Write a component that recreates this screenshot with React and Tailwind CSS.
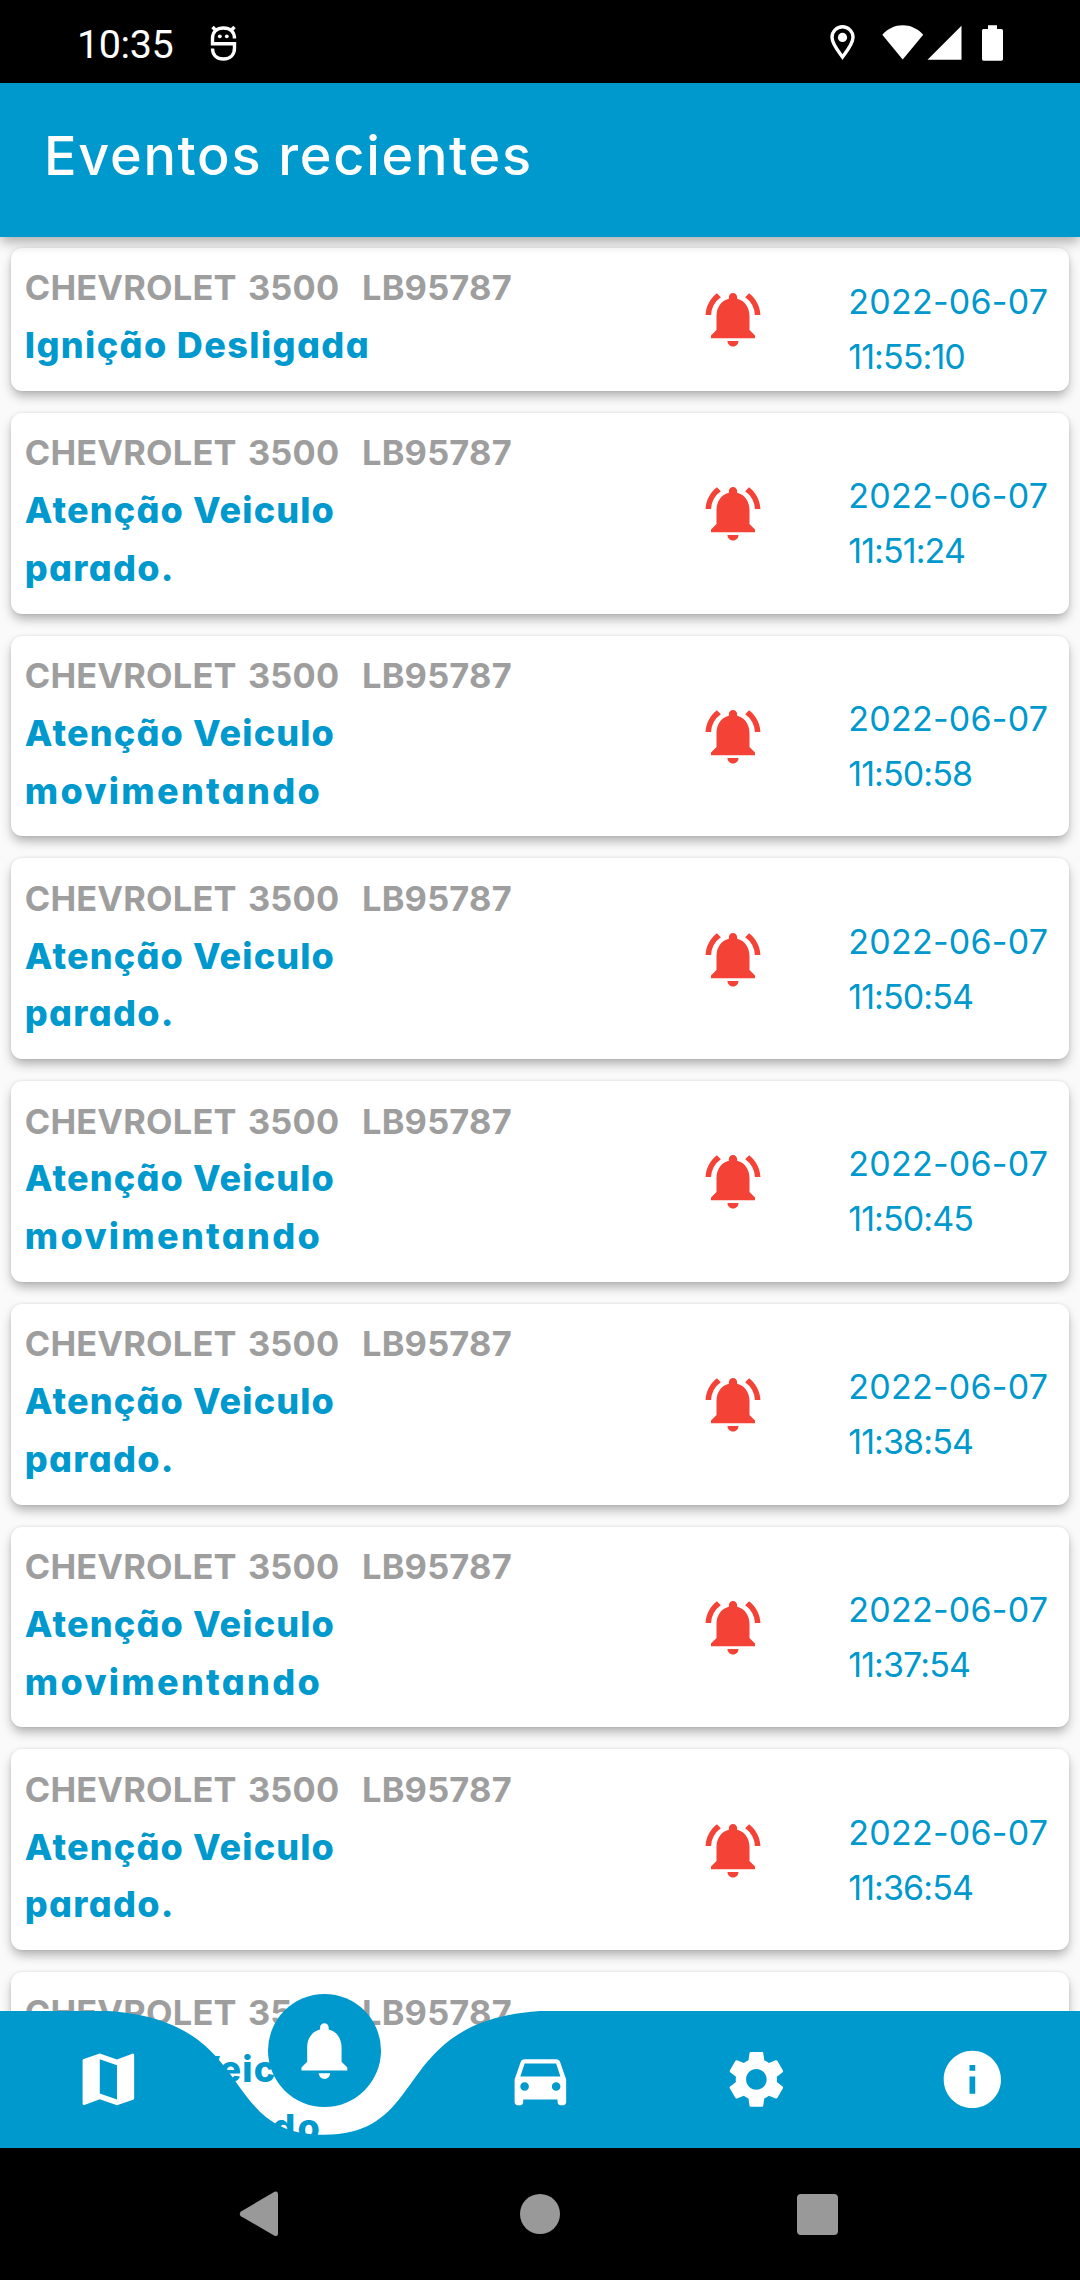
import React from 'react';
import {
  MdDirectionsCar,
  MdInfo,
  MdMap,
  MdNotifications,
  MdNotificationsActive,
  MdSettings,
} from 'react-icons/md';

const IGNITION_OFF = { text: 'Ignição Desligada', textClass: 'tracking-[1.4px]' };
const STOPPED = {
  text: 'Atenção Veiculo',
  textClass: 'tracking-[1.15px]',
  rest: 'parado.',
  restClass: 'tracking-[1.3px]',
};
const MOVING = {
  text: 'Atenção Veiculo',
  textClass: 'tracking-[1.15px]',
  rest: 'movimentando',
  restClass: 'tracking-[2.3px]',
};

const events = [
  { message: IGNITION_OFF, time: '11:55:10' },
  { message: STOPPED, time: '11:51:24' },
  { message: MOVING, time: '11:50:58' },
  { message: STOPPED, time: '11:50:54' },
  { message: MOVING, time: '11:50:45' },
  { message: STOPPED, time: '11:38:54' },
  { message: MOVING, time: '11:37:54' },
  { message: STOPPED, time: '11:36:54' },
  { message: MOVING, time: '11:36:45' },
];

const tabs = [
  { name: 'map', Icon: MdMap },
  { name: 'events', Icon: MdNotifications, active: true },
  { name: 'vehicles', Icon: MdDirectionsCar },
  { name: 'settings', Icon: MdSettings },
  { name: 'info', Icon: MdInfo },
];

function StatusBar() {
  return (
    <div className="flex h-[83px] shrink-0 items-start bg-black pr-[77px] pl-[77px] text-white">
      <span className="w-[133px] pt-[21px] font-['Roboto',sans-serif] text-[39.5px] leading-[47px] tracking-[-0.4px]">
        10:35
      </span>
      <svg className="mt-[25px] h-9 w-[27px]" viewBox="0 0 27 36" fill="none" stroke="currentColor" strokeWidth="3.4">
        <path d="M24.5 13.5C24.5 7 20 3 13.5 3S2.5 7 2.5 13.5V18.7H24.5V23C24.5 30 20 34 13.5 34S2.5 30 2.5 23.5" />
        <path d="M2.5 2l4 4M24.5 2l-4 4" />
        <circle cx="9.8" cy="11.3" r="1.9" fill="currentColor" stroke="none" />
        <circle cx="16.8" cy="11.3" r="1.9" fill="currentColor" stroke="none" />
      </svg>

      <div className="ml-auto flex pt-[25px]">
        <svg className="h-9 w-[25px]" viewBox="0 0 25 36" fill="none" stroke="currentColor" strokeWidth="3.4">
          <path d="M12.5 32C8.5 26.5 2 19 2 12.3a10.5 10.5 0 0 1 21 0C23 19 16.5 26.5 12.5 32z" />
          <circle cx="12.5" cy="12.4" r="4.6" fill="currentColor" stroke="none" />
        </svg>
        <svg className="ml-[27px] h-9 w-[42px]" viewBox="0 0 42 36" fill="currentColor">
          <path d="M0.3 9.7C6 3.5 13 0.3 20.7 0.3S35.5 3.5 41.2 9.7L20.7 34.5z" />
        </svg>
        <svg className="ml-[3px] h-9 w-[35px]" viewBox="0 0 35 36" fill="currentColor">
          <path d="M0.5 34.7L34.5 0.7V34.7z" />
        </svg>
        <svg className="ml-[20px] h-9 w-[21px]" viewBox="0 0 21 36" fill="currentColor">
          <path d="M6 0.3h9V4h4.5Q21 4 21 5.5V34Q21 35.7 19.5 35.7H1.5Q0 35.7 0 34V5.5Q0 4 1.5 4H6z" />
        </svg>
      </div>
    </div>
  );
}

function EventCard({ message, time }) {
  return (
    <li className="grid shrink-0 grid-cols-[675px_148.5px_1fr] items-center rounded-[11px] bg-white pl-[13.75px] shadow-[0_6px_11px_-1px_rgba(0,0,0,0.3),0_0_3px_rgba(0,0,0,0.1)]">
      <div className="pt-[11.5px] pb-[16px] text-[36px] leading-[57.75px] font-extrabold text-[#0099cd]">
        <p className="text-[34.4px] font-bold tracking-[0.2px] [word-spacing:3px] whitespace-pre text-[#9e9e9e]">
          {'CHEVROLET 3500  LB95787'}
        </p>
        <p className={message.textClass}>{message.text}</p>
        {message.rest && <p className={message.restClass}>{message.rest}</p>}
      </div>
      <MdNotificationsActive className="size-[66px] text-[#f44336]" />
      <div className="pt-5 text-[34px] leading-[55px] text-[#0099cd]">
        <p className="tracking-[0.25px]">2022-06-07</p>
        <p className="tracking-[-0.9px]">{time}</p>
      </div>
    </li>
  );
}

function BottomNav() {
  return (
    <nav className="absolute inset-x-0 bottom-0 h-[137.5px]">
      {/* bar with the notch under the active tab */}
      <svg className="absolute inset-0 size-full" viewBox="0 0 1080 137.5" fill="#0099cd">
        <path d="M0 0H108C259.2 10.3 216 123.75 324 123.75S388.8 10.3 540 0H1080V137.5H0z" />
      </svg>
      <div className="relative grid h-full grid-cols-5 text-white">
        {tabs.map(({ name, Icon, active }) => (
          <div key={name} className="flex items-center justify-center">
            {active ? (
              <span className="relative -top-[29px] flex size-[113px] items-center justify-center rounded-full bg-[#0099cd]">
                <Icon className="size-[68.75px]" />
              </span>
            ) : (
              <Icon className="size-[68.75px]" />
            )}
          </div>
        ))}
      </div>
    </nav>
  );
}

function SystemNav() {
  return (
    <div className="flex h-[132px] shrink-0 items-center bg-black pl-[239px] text-[#999]">
      <svg className="h-[46px] w-[40px]" viewBox="0 0 40 46" fill="currentColor">
        <path d="M2 20.5L35.5 0.8Q39 -0.5 39 3V42.5Q39 46 35.5 44.8L2 25.3Q-0.5 23 2 20.5z" />
      </svg>
      <span className="ml-[241px] size-10 rounded-full bg-[#999]" />
      <span className="ml-[237px] size-[41px] rounded-[4px] bg-[#999]" />
    </div>
  );
}

export default function App() {
  return (
    <div className="flex h-[2280px] w-[1080px] flex-col overflow-hidden bg-[#fafafa] font-['Inter','Liberation_Sans',sans-serif] [font-feature-settings:'cv11']">
      <StatusBar />
      <header className="relative z-10 flex h-[154px] shrink-0 items-center bg-[#0099cd] pb-[9px] pl-[44px] shadow-[0_6px_12px_-1px_rgba(0,0,0,0.32)]">
        <h1 className="text-[54px] font-medium tracking-[1.7px] text-white">Eventos recientes</h1>
      </header>
      <main className="relative min-h-0 flex-1 overflow-hidden">
        <ul className="flex flex-col gap-[22px] px-[11px] pt-[10.75px]">
          {events.map((event) => (
            <EventCard key={event.time} {...event} />
          ))}
        </ul>
        <BottomNav />
      </main>
      <SystemNav />
    </div>
  );
}
